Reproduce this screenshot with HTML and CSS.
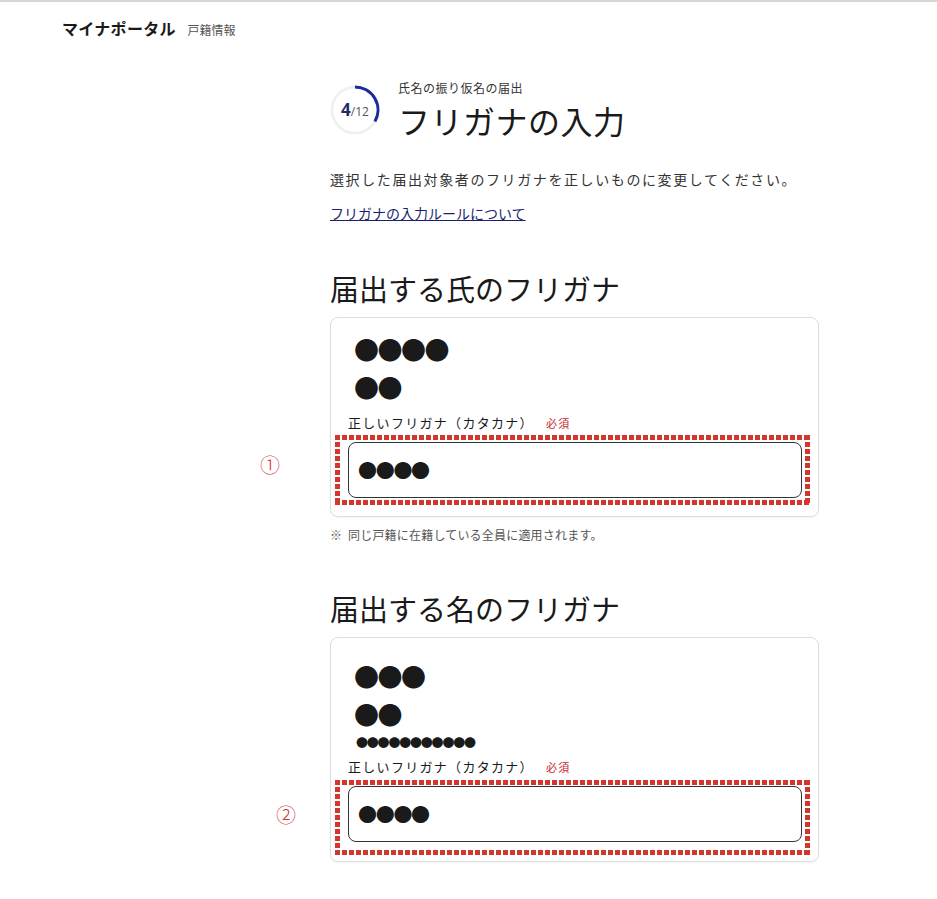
FILE: index.html
```html
<!DOCTYPE html>
<html lang="ja">
<head>
  <meta charset="UTF-8" />
  <title>フリガナの入力 | マイナポータル</title>
  <link rel="stylesheet" href="styles.css">
</head>
<body>
  <header class="site-header">
    <span class="brand">マイナポータル</span>
    <span class="brand-sub">戸籍情報</span>
  </header>

  <main class="main">
    <div class="page-title">
      <div class="step">
        <svg width="50" height="50" viewBox="0 0 50 50">
          <circle cx="25" cy="25" r="23" fill="none" stroke="#efefef" stroke-width="2.5" />
          <path d="M25 2 A23 23 0 0 1 44.9 36.5" fill="none" stroke="#1b2a9e" stroke-width="3" />
        </svg>
        <span class="step-text"><b>4</b>/12</span>
      </div>
      <div>
        <p class="title-sub">氏名の振り仮名の届出</p>
        <h1>フリガナの入力</h1>
      </div>
    </div>

    <p class="lead">選択した届出対象者のフリガナを正しいものに変更してください。</p>
    <p><a class="rule-link" href="#">フリガナの入力ルールについて</a></p>

    <h2>届出する氏のフリガナ</h2>
    <div class="card">
      <div class="name">●●●●</div>
      <div class="name">●●</div>
      <label class="field-label">正しいフリガナ（カタカナ）<span class="required">必須</span></label>
      <div class="field">
        <span class="mark-num">①</span>
        <div class="input">●●●●</div>
      </div>
    </div>
    <p class="note">※&nbsp;&nbsp;同じ戸籍に在籍している全員に適用されます。</p>

    <h2>届出する名のフリガナ</h2>
    <div class="card card-given">
      <div class="name">●●●</div>
      <div class="name">●●</div>
      <div class="name-small">●●●●●●●●●●●</div>
      <label class="field-label">正しいフリガナ（カタカナ）<span class="required">必須</span></label>
      <div class="field field-second">
        <span class="mark-num">②</span>
        <div class="input">●●●●</div>
      </div>
    </div>
  </main>
</body>
</html>
```

FILE: styles.css
```css
body { margin: 0; border-top: 2px solid #d6d6d6; background: #fff; color: #1a1a1a; font-family: "Noto Sans CJK JP", "Noto Sans", sans-serif; }
p { margin: 0; }

.site-header { padding: 16px 62px; line-height: 20px; }
.brand { font-size: 16px; font-weight: bold; letter-spacing: 0.3px; }
.brand-sub { font-size: 12px; color: #555; margin-left: 8px; }

.main { margin-left: 330px; width: 489px; padding-bottom: 40px; }

.page-title { display: flex; gap: 18px; margin-top: 24px; }
.step { position: relative; width: 50px; height: 50px; margin-top: 5px; }
.step svg { display: block; }
.step-text { position: absolute; left: 0; right: 0; top: 15px; text-align: center; font-family: "Open Sans", sans-serif; font-size: 12px; line-height: 20px; color: #555; }
.step-text b { font-size: 17px; color: #1d2a6b; }
.title-sub { font-size: 12px; line-height: 16px; letter-spacing: 0.5px; color: #333; }
h1 { margin: 4px 0 0; font-size: 32px; line-height: 40px; font-weight: 400; letter-spacing: 0.5px; }

.lead { margin-top: 29px; font-size: 14px; line-height: 20px; letter-spacing: 1.6px; color: #333; }
.rule-link { display: inline-block; margin-top: 14px; font-size: 14px; line-height: 20px; color: #1a1f6e; text-decoration: underline; }

h2 { margin: 44px 0 9px; font-size: 29px; line-height: 40px; font-weight: 400; }

.card { border: 1px solid #ddd; border-radius: 8px; padding: 12px 16px 18px 17px; box-shadow: 0 1px 2px rgba(0,0,0,0.05); }
.card-given { padding-top: 19px; padding-bottom: 19px; }
.name { padding-left: 6px; font-size: 25px; line-height: 38px; letter-spacing: -1.5px; }
.name-small { margin-top: 3px; padding-left: 8px; font-size: 12px; line-height: 14px; letter-spacing: -1.2px; }

.field-label { display: block; margin-top: 7px; font-size: 13px; line-height: 20px; letter-spacing: 1.3px; }
.required { margin-left: 12px; font-size: 11px; color: #c3262b; }

.field { position: relative; margin-top: 9px; }
.field::before {
  content: "";
  position: absolute;
  top: -7px; bottom: -7px; left: -13px; right: -8px;
  pointer-events: none;
  background:
    repeating-linear-gradient(90deg, #d3372b 0 5px, transparent 5px 7px) top left / 100% 5px no-repeat,
    repeating-linear-gradient(90deg, #d3372b 0 5px, transparent 5px 7px) bottom left / 100% 5px no-repeat,
    repeating-linear-gradient(180deg, #d3372b 0 5px, transparent 5px 7px) top left / 5px 100% no-repeat,
    repeating-linear-gradient(180deg, #d3372b 0 5px, transparent 5px 7px) top right / 5px 100% no-repeat;
}
.field-second::before { top: -6px; bottom: -13px; }
.input { height: 54px; border: 1px solid #333; border-radius: 8px; padding-left: 9px; font-size: 19px; line-height: 54px; letter-spacing: -1.3px; }

.mark-num { position: absolute; left: -88px; top: 11px; font-size: 20px; line-height: 24px; color: #d33a3a; font-weight: 300; }
.field-second .mark-num { left: -72px; top: 17px; }

.note { margin-top: 9px; font-size: 12px; line-height: 18px; color: #555; letter-spacing: 0.2px; }
```
